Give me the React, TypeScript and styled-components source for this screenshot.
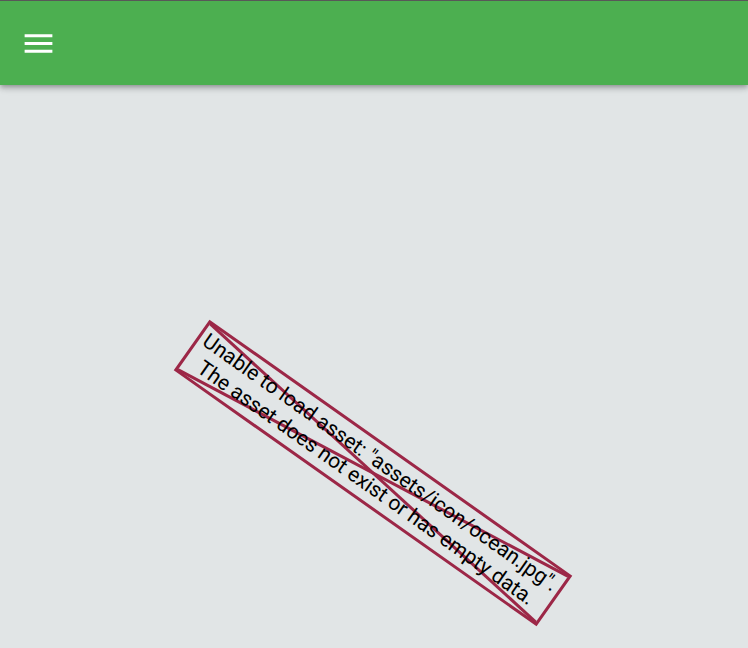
import React from "react";
import styled, { createGlobalStyle } from "styled-components";

const GlobalStyle = createGlobalStyle`
  html, body {
    margin: 0;
    padding: 0;
    background: #e1e5e6;
    font-family: Roboto, "Noto Sans", sans-serif;
    overflow: hidden;
  }
`;

const Page = styled.div`
  display: flex;
  flex-direction: column;
  width: 748px;
  height: 648px;
`;

const AppBar = styled.header`
  position: relative;
  z-index: 1;
  display: flex;
  align-items: center;
  height: 84px;
  padding-left: 20px;
  background: #4caf50;
  border-top: 1px solid #585858;
  box-shadow: 0 2px 4px -1px rgba(0, 0, 0, 0.2), 0 4px 5px 0 rgba(0, 0, 0, 0.14),
    0 1px 10px 0 rgba(0, 0, 0, 0.12);
`;

const MenuButton = styled.button`
  display: flex;
  padding: 0;
  border: none;
  background: none;
  cursor: pointer;
`;

const Body = styled.main`
  flex: 1;
  display: flex;
  align-items: flex-start;
  padding: 357px 0 0 151px;
`;

const BrokenImage = styled.div`
  position: relative;
  box-sizing: border-box;
  width: 444px;
  height: 62px;
  padding: 3px 0;
  border: 3px solid #9c2747;
  transform: rotate(35.2deg);
  color: #000;
  font-size: 21px;
  line-height: 25px;
  text-align: center;
  white-space: nowrap;
`;

const Cross = styled.svg`
  position: absolute;
  inset: 0;
  width: 100%;
  height: 100%;
  overflow: visible;
`;

const Message = styled.div`
  position: relative;
`;

const MenuIcon = () => (
  <svg width="37" height="37" viewBox="0 0 24 24" fill="#fff">
    <path d="M3 6h18v2H3zM3 11h18v2H3zM3 16h18v2H3z" />
  </svg>
);

export default function App() {
  return (
    <>
      <GlobalStyle />
      <Page>
        <AppBar>
          <MenuButton aria-label="menu">
            <MenuIcon />
          </MenuButton>
        </AppBar>
        <Body>
          <BrokenImage>
            <Cross viewBox="0 0 438 56" preserveAspectRatio="none">
              <line x1="0" y1="0" x2="438" y2="56" stroke="#9c2747" strokeWidth="3" />
              <line x1="0" y1="56" x2="438" y2="0" stroke="#9c2747" strokeWidth="3" />
            </Cross>
            <Message>
              Unable to load asset: "assets/icon/ocean.jpg".
              <br />
              The asset does not exist or has empty data.
            </Message>
          </BrokenImage>
        </Body>
      </Page>
    </>
  );
}
